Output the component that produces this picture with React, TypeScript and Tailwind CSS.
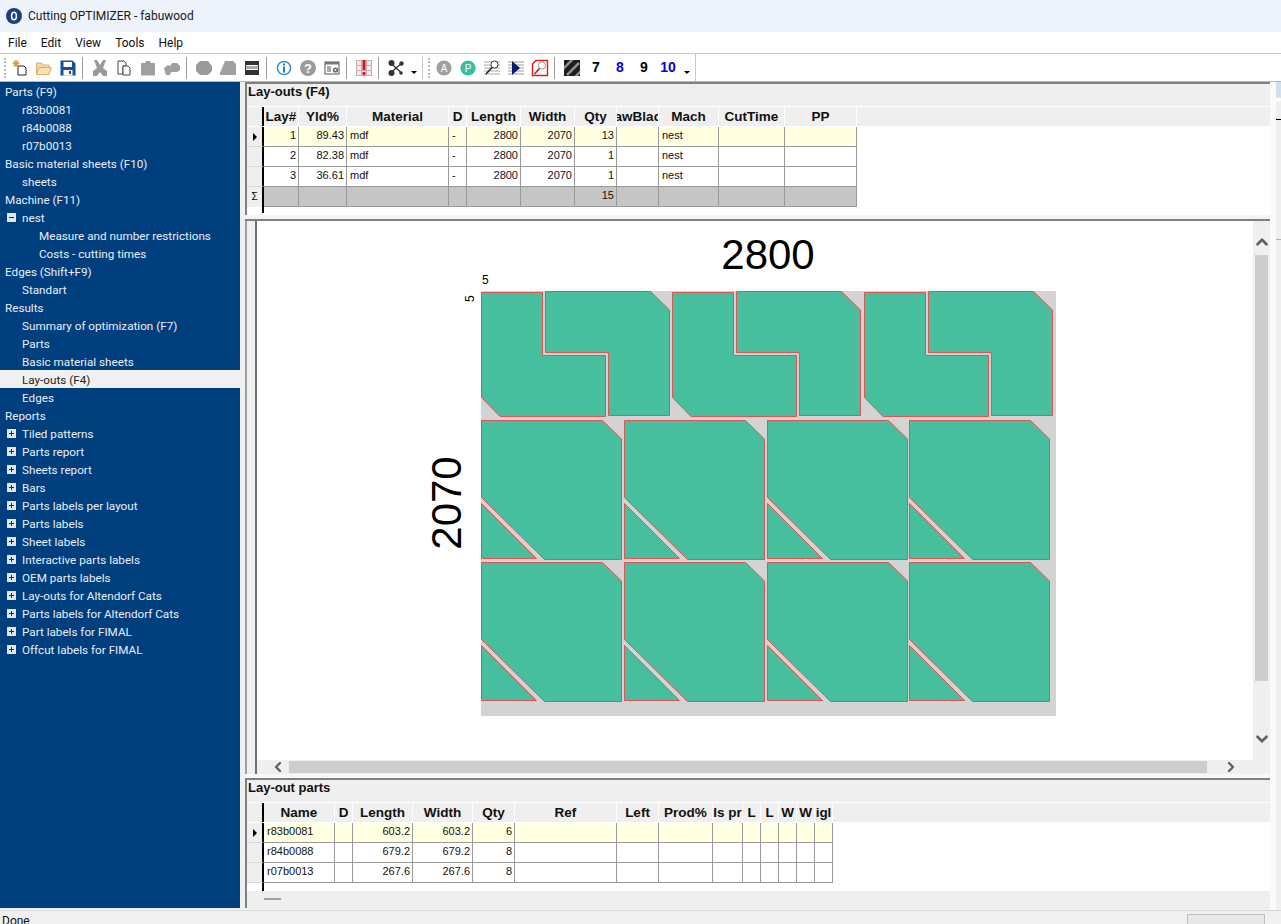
import { ChevronUp, ChevronDown, ChevronLeft, ChevronRight } from "lucide-react";

type TreeRow = { label: string; level: number; box?: "plus" | "minus"; active?: boolean };

const tree: TreeRow[] = [
  { label: "Parts (F9)", level: 0 },
  { label: "r83b0081", level: 1 },
  { label: "r84b0088", level: 1 },
  { label: "r07b0013", level: 1 },
  { label: "Basic material sheets (F10)", level: 0 },
  { label: "sheets", level: 1 },
  { label: "Machine (F11)", level: 0 },
  { label: "nest", level: 1, box: "minus" },
  { label: "Measure and number restrictions", level: 2 },
  { label: "Costs - cutting times", level: 2 },
  { label: "Edges (Shift+F9)", level: 0 },
  { label: "Standart", level: 1 },
  { label: "Results", level: 0 },
  { label: "Summary of optimization (F7)", level: 1 },
  { label: "Parts", level: 1 },
  { label: "Basic material sheets", level: 1 },
  { label: "Lay-outs (F4)", level: 1, active: true },
  { label: "Edges", level: 1 },
  { label: "Reports", level: 0 },
  { label: "Tiled patterns", level: 1, box: "plus" },
  { label: "Parts report", level: 1, box: "plus" },
  { label: "Sheets report", level: 1, box: "plus" },
  { label: "Bars", level: 1, box: "plus" },
  { label: "Parts labels per layout", level: 1, box: "plus" },
  { label: "Parts labels", level: 1, box: "plus" },
  { label: "Sheet labels", level: 1, box: "plus" },
  { label: "Interactive parts labels", level: 1, box: "plus" },
  { label: "OEM parts labels", level: 1, box: "plus" },
  { label: "Lay-outs for Altendorf Cats", level: 1, box: "plus" },
  { label: "Parts labels for Altendorf Cats", level: 1, box: "plus" },
  { label: "Part labels for FIMAL", level: 1, box: "plus" },
  { label: "Offcut labels for FIMAL", level: 1, box: "plus" },
];

const uiFont = "font-['Roboto',sans-serif]";
const gridFont = "font-['Liberation_Sans',Arial,sans-serif]";

function Box({ kind }: { kind: "plus" | "minus" }) {
  return (
    <svg width="9" height="9" viewBox="0 0 9 9" className="absolute left-[7px] top-[5px]">
      <rect x="0" y="0" width="9" height="9" fill="#dfe6ee" />
      <rect x="2" y="4" width="5" height="1" fill="#1c2f4a" />
      {kind === "plus" && <rect x="4" y="2" width="1" height="5" fill="#1c2f4a" />}
    </svg>
  );
}

function Sidebar() {
  return (
    <div className={`w-[240px] h-[826px] bg-[#003f7d] shrink-0 text-[11.7px] ${uiFont}`}>
      {tree.map((r, i) => (
        <div
          key={i}
          className={`relative h-[18px] pt-px leading-[18px] whitespace-nowrap ${r.active ? "bg-[#f0f0f0] text-[#222]" : "text-[#e8eef6]"} ${
            r.level === 0 ? "pl-[5px]" : r.level === 1 ? "pl-[22px]" : "pl-[39px]"
          }`}
        >
          {r.box && <Box kind={r.box} />}
          {r.label}
        </div>
      ))}
    </div>
  );
}

function Sep() {
  return (
    <div className="w-2 h-full flex items-center">
      <div className="ml-[2px] w-px h-[22px] bg-[#a0a0a0]" />
    </div>
  );
}

function Btn({ children }: { children: React.ReactNode }) {
  return <div className="w-6 h-full flex items-center justify-center shrink-0">{children}</div>;
}

function Gripper() {
  return <div className="w-px h-[20px] border-l-2 border-dotted border-[#bbb]" />;
}

function Drop() {
  return <div className="w-0 h-0 border-x-[3px] border-x-transparent border-t-[3px] border-t-black mt-[9px]" />;
}

function Num({ n, blue }: { n: string; blue?: boolean }) {
  return (
    <Btn>
      <span className={`text-[14px] font-bold ${gridFont} ${blue ? "text-[#0000e0]" : "text-black"}`}>{n}</span>
    </Btn>
  );
}

const I = ({ children }: { children: React.ReactNode }) => (
  <svg width="18" height="18" viewBox="0 0 18 18">
    {children}
  </svg>
);

function Toolbar() {
  return (
    <div className="h-[27px] bg-white flex">
      <div className="w-[696px] h-full flex items-center pl-2 border-r border-[#c8c8c8] relative">
        <div className="absolute left-[4px] top-[4px]">
          <Gripper />
        </div>
        <Btn>
          <I>
            <path d="M7 7h6l2 2v7H7z" fill="#fff" stroke="#222" />
            <path d="M5 1v7M1.5 4.5h7M2.5 2l5 5M7.5 2l-5 5" stroke="#e8941c" strokeWidth="1.2" />
          </I>
        </Btn>
        <Btn>
          <I>
            <path d="M1.5 15.5V4h5l1.5 2h6v2.5" fill="#f4d8a0" stroke="#d8b070" />
            <path d="M1.5 15.5L4 8.5h12.5l-2.5 7z" fill="#f8e0b0" stroke="#d8b070" />
          </I>
        </Btn>
        <Btn>
          <I>
            <path d="M1.5 1.5h12l3 3v12h-15z" fill="#14509c" />
            <rect x="4.5" y="3" width="8.5" height="5" fill="#fff" />
            <rect x="4.5" y="11" width="9" height="5.5" fill="#fff" />
            <rect x="10" y="12" width="2" height="3" fill="#14509c" />
          </I>
        </Btn>
        <Sep />
        <Btn>
          <I>
            <path d="M3 1h3l3 5 3-5h3l-3 8 4 3v5h-4l-3-4-3 4H2v-5l4-3z" fill="#9a9a9a" />
          </I>
        </Btn>
        <Btn>
          <I>
            <path d="M3 2h6l2 2v3H8v8H3z" fill="#fff" stroke="#444" />
            <path d="M8 7h5l2 2v7H8z" fill="#fff" stroke="#444" />
          </I>
        </Btn>
        <Btn>
          <I>
            <path d="M2 4h4l1-2h4l1 2h4v12.5H2z" fill="#a0a0a0" />
          </I>
        </Btn>
        <Btn>
          <I>
            <path d="M1 9l4-3 2 1 2-3h5l3 3v4l-3 2H8l-1 3H3l-1-3z" fill="#a0a0a0" />
          </I>
        </Btn>
        <Sep />
        <Btn>
          <I>
            <path d="M5 2h8l4 5v5l-4 4H5l-4-4V6z" fill="#9a9a9a" />
          </I>
        </Btn>
        <Btn>
          <I>
            <path d="M6 2h8l3 3v11H1v-2z" fill="#a0a0a0" />
          </I>
        </Btn>
        <Btn>
          <I>
            <rect x="2" y="2" width="14" height="14" fill="#333" />
            <rect x="3" y="6" width="12" height="1" fill="#fff" />
            <rect x="3" y="7" width="12" height="3" fill="#aaa" />
            <rect x="3" y="10" width="12" height="1" fill="#fff" />
          </I>
        </Btn>
        <Sep />
        <Btn>
          <I>
            <circle cx="9" cy="9" r="6.6" fill="#fff" stroke="#2a90d8" strokeWidth="1.5" />
            <rect x="8" y="4.5" width="2" height="2" fill="#2a7ac0" />
            <rect x="8" y="7.5" width="2" height="6" fill="#2a7ac0" />
          </I>
        </Btn>
        <Btn>
          <I>
            <circle cx="9" cy="9" r="8" fill="#9c9c9c" />
            <text x="9" y="13.5" textAnchor="middle" fontSize="13" fontWeight="700" fill="#fff" fontFamily="Liberation Sans">
              ?
            </text>
          </I>
        </Btn>
        <Btn>
          <I>
            <rect x="2" y="3" width="14" height="12" fill="#fff" stroke="#555" />
            <rect x="2" y="3" width="14" height="2.5" fill="#777" />
            <path d="M4 8h4M4 10h4M4 12h4" stroke="#555" />
            <circle cx="12.5" cy="11" r="2.6" fill="#666" />
            <circle cx="12.5" cy="11" r="1" fill="#fff" />
          </I>
        </Btn>
        <Sep />
        <Btn>
          <I>
            <rect x="1.5" y="1.5" width="15" height="15" fill="#f4eaea" stroke="#c8b0b0" />
            <path d="M1.5 6.5h15M1.5 11.5h15M6.5 1.5v15M11.5 1.5v15" stroke="#c8b0b0" />
            <rect x="7.5" y="1" width="3" height="10" fill="#e01020" />
            <rect x="7.5" y="13" width="3" height="3" fill="#e01020" />
          </I>
        </Btn>
        <Sep />
        <Btn>
          <I>
            <path d="M4.5 4.5L9 9M4.5 13.5L9 9M9 9L14 5M9 9L14 13.5" stroke="#333" strokeWidth="1.3" />
            <circle cx="4.5" cy="4" r="3" fill="#333" />
            <circle cx="4.5" cy="14" r="3" fill="#333" />
            <circle cx="14.5" cy="4.5" r="2.2" fill="#333" />
            <circle cx="14" cy="14" r="1.8" fill="#333" />
          </I>
        </Btn>
        <div className="w-[8px] pl-[3px] h-full flex items-center">
          <Drop />
        </div>
        <div className="absolute left-[422px] top-[2px] w-px h-[23px] bg-[#c8c8c8]" />
        <div className="absolute left-[428px] top-[4px]">
          <Gripper />
        </div>
        <div className="w-4" />
        <Btn>
          <I>
            <circle cx="9" cy="9" r="7.6" fill="#a0a0a0" />
            <text x="9" y="12.5" textAnchor="middle" fontSize="10" fill="#fff" fontFamily="Liberation Sans">
              A
            </text>
          </I>
        </Btn>
        <Btn>
          <I>
            <circle cx="9" cy="9" r="7.6" fill="#37bfa4" />
            <text x="9" y="12.5" textAnchor="middle" fontSize="10" fill="#fff" fontFamily="Liberation Sans">
              P
            </text>
          </I>
        </Btn>
        <Btn>
          <I>
            <path d="M1 3h16M1 6h16M1 9h16M1 12h16M1 15h16" stroke="#aaa" />
            <circle cx="11.5" cy="5.5" r="3.6" fill="#fff" stroke="#333" />
            <path d="M9 8.5l-6 6.5" stroke="#222" strokeWidth="1.6" />
          </I>
        </Btn>
        <Btn>
          <I>
            <path d="M1 3h16M1 6h16M1 9h16M1 12h16M1 15h16" stroke="#999" />
            <path d="M5 2l8 7-8 7z" fill="#0c1a70" />
          </I>
        </Btn>
        <Btn>
          <I>
            <path d="M5 1.5h11.5v15H1.5V5z" fill="#fff" stroke="#e81818" strokeWidth="1.4" />
            <circle cx="11" cy="6.5" r="3.6" fill="#fff" stroke="#999" />
            <path d="M8.5 9.5l-5 5.5" stroke="#b02020" strokeWidth="1.6" />
          </I>
        </Btn>
        <Sep />
        <Btn>
          <svg width="16" height="16" viewBox="0 0 16 16">
            <rect width="16" height="16" fill="#1c1c1c" />
            <path d="M-1 9L9-1M3 15L15 3M9 19L19 9" stroke="#8c8c8c" strokeWidth="2.6" />
          </svg>
        </Btn>
        <Num n="7" />
        <Num n="8" blue />
        <Num n="9" />
        <Num n="10" blue />
        <div className="pl-[4px] h-full flex items-center">
          <Drop />
        </div>
      </div>
    </div>
  );
}

const top = {
  cols: "grid-cols-[17px_35px_48px_102px_18px_54px_54px_42px_42px_60px_66px_72px]",
  head: ["Lay#", "Yld%", "Material", "D", "Length", "Width", "Qty", "SawBlade", "Mach", "CutTime", "PP"],
  align: ["r", "r", "l", "l", "r", "r", "r", "l", "l", "l", "l"],
  rows: [
    ["1", "89.43", "mdf", "-", "2800", "2070", "13", "", "nest", "", ""],
    ["2", "82.38", "mdf", "-", "2800", "2070", "1", "", "nest", "", ""],
    ["3", "36.61", "mdf", "-", "2800", "2070", "1", "", "nest", "", ""],
  ],
};

const bottom = {
  cols: "grid-cols-[17px_71px_18px_60px_60px_42px_102px_42px_54px_30px_18px_18px_18px_18px_18px]",
  head: ["Name", "D", "Length", "Width", "Qty", "Ref", "Left", "Prod%", "Is pr", "L", "L", "W", "W", "igl"],
  align: ["l", "l", "r", "r", "r", "l", "r", "r", "l", "l", "l", "l", "l", "l"],
  rows: [
    ["r83b0081", "", "603.2", "603.2", "6", "", "", "", "", "", "", "", "", ""],
    ["r84b0088", "", "679.2", "679.2", "8", "", "", "", "", "", "", "", "", ""],
    ["r07b0013", "", "267.6", "267.6", "8", "", "", "", "", "", "", "", "", ""],
  ],
};

function DataGrid({ t, sum }: { t: typeof top; sum?: boolean }) {
  const cell = "h-5 border-r border-b border-[#9a9a9a] text-[11px] leading-[17px] pl-[3px] pr-[2px] whitespace-nowrap overflow-hidden text-[#111]";
  return (
    <div className={gridFont}>
      <div className="bg-[#efefef] border-t border-white border-b-2 border-black -mb-px">
        <div className={`grid ${t.cols} h-[19px]`}>
          <div className="border-r-2 border-black" />
          {t.head.map((h, i) => (
            <div
              key={i}
              className="flex justify-center overflow-hidden border-r border-white text-[13.5px] font-bold leading-[19px] text-[#111] whitespace-nowrap"
            >
              {h}
            </div>
          ))}
        </div>
      </div>
      {t.rows.map((r, ri) => (
        <div key={ri} className={`grid ${t.cols} w-fit ${ri === 0 ? "bg-[#ffffe1]" : "bg-white"}`}>
          <div className="h-5 bg-[#efefef] border-b border-[#d8d8d8] border-r-2 border-r-black flex items-center justify-center">
            {ri === 0 && <div className="w-0 h-0 border-y-[4px] border-y-transparent border-l-[4px] border-l-black" />}
          </div>
          {r.map((c, i) => (
            <div key={i} className={`${cell} ${t.align[i] === "r" ? "text-right" : "text-left"}`}>
              {c}
            </div>
          ))}
        </div>
      ))}
      {sum && (
        <div className={`grid ${t.cols} w-fit bg-[#c6c6c6]`}>
          <div className="h-5 bg-[#efefef] border-r-2 border-black text-[10px] leading-[20px] text-center">Σ</div>
          {t.head.map((_, i) => (
            <div key={i} className={`${cell} ${i === 6 ? "text-right" : ""}`}>
              {i === 6 ? "15" : ""}
            </div>
          ))}
        </div>
      )}
      <div className={`w-[17px] border-r-2 border-black ${sum ? "h-[6px]" : "h-[8px]"}`} />
    </div>
  );
}

const sx = [0, 191, 383];
const bx = [0, 143, 286, 428];

function Layout() {
  const stroke = { fill: "#47bf9f", stroke: "#e05454", strokeWidth: 1 };
  return (
    <svg width="996" height="539" viewBox="257 221 996 539" className="absolute left-0 top-0">
      <text x="768" y="269" textAnchor="middle" fontSize="42" fontFamily="Liberation Sans" fill="#000">
        2800
      </text>
      <text
        x="0"
        y="0"
        transform="translate(461 503) rotate(-90)"
        textAnchor="middle"
        fontSize="42"
        fontFamily="Liberation Sans"
        fill="#000"
      >
        2070
      </text>
      <text x="482" y="284" fontSize="12" fontFamily="Liberation Sans" fill="#000">
        5
      </text>
      <text x="0" y="0" transform="translate(474 302) rotate(-90)" fontSize="12" fontFamily="Liberation Sans" fill="#000">
        5
      </text>
      <rect x="481" y="291" width="575" height="425" fill="#d3d3d3" />
      {sx.map((dx) => (
        <g key={dx} transform={`translate(${dx} 0)`}>
          <polygon {...stroke} points="481.5,292.5 542.5,292.5 542.5,355.5 605.5,355.5 605.5,416.5 500,416.5 481.5,397.5" />
          <polygon {...stroke} points="545.5,291.5 650.5,291.5 669.5,310 669.5,415.5 608.5,415.5 608.5,352.5 545.5,352.5" />
        </g>
      ))}
      {[0, 142].map((dy) =>
        bx.map((dx) => (
          <g key={`${dx}-${dy}`} transform={`translate(${dx} ${dy})`}>
            <polygon {...stroke} points="481.5,420.5 602.5,420.5 621.5,439 621.5,559.5 544.5,559.5 481.5,497.5" />
            <polygon {...stroke} points="481.5,503.5 536.5,558.5 481.5,558.5" />
          </g>
        ))
      )}
    </svg>
  );
}

function Right() {
  return (
    <div className="w-[1025px] flex flex-col shrink-0">
      {/* upper grid */}
      <div className="h-[133px] border-t-2 border-l-2 border-[#808080] bg-[#efefef] shrink-0 flex flex-col">
        <div className={`h-[22px] pl-px text-[13px] font-bold leading-[15px] text-[#111] ${gridFont}`}>Lay-outs (F4)</div>
        <div className="h-[109px] bg-white">
          <DataGrid t={top} sum />
        </div>
      </div>
      <div className="h-[4px] bg-[#f4f4f4] shrink-0" />
      {/* drawing */}
      <div className="h-[555px] flex shrink-0 bg-[#efefef] border-t-2 border-[#808080]">
        <div className="w-3 border-l-2 border-[#a0a0a0] border-r-2 border-r-[#707070] shrink-0" />
        <div className="flex-1 flex flex-col">
          <div className="flex h-[539px]">
            <div className="relative w-[996px] bg-white overflow-hidden shrink-0">
              <Layout />
            </div>
            <div className="flex-1 flex flex-col items-center justify-between py-[12px] relative">
              <ChevronUp size={18} strokeWidth={3.5} className="text-[#606060]" />
              <div className="absolute top-[34px] left-[2px] w-[13px] h-[426px] bg-[#cdcdcd]" />
              <ChevronDown size={18} strokeWidth={3.5} className="text-[#606060]" />
            </div>
          </div>
          <div className="h-[14px] flex items-center relative">
            <ChevronLeft size={16} strokeWidth={3.5} className="text-[#606060] ml-[13px]" />
            <div className="absolute left-[32px] top-px w-[918px] h-[12px] bg-[#cdcdcd]" />
            <ChevronRight size={16} strokeWidth={3.5} className="text-[#606060] ml-[937px]" />
          </div>
        </div>
      </div>
      <div className="h-[4px] bg-[#f8f8f8] shrink-0" />
      {/* lower grid */}
      <div className="h-[130px] border-t-2 border-l-2 border-[#808080] bg-[#efefef] shrink-0 flex flex-col">
        <div className={`h-[22px] pl-px text-[13px] font-bold leading-[15px] text-[#111] ${gridFont}`}>Lay-out parts</div>
        <div className="h-[89px] bg-white">
          <DataGrid t={bottom} />
        </div>
        <div className="pl-[17px] pt-[7px]">
          <div className="w-[17px] h-[2px] bg-[#a0a0a0]" />
        </div>
      </div>
    </div>
  );
}

export default function App() {
  return (
    <div className={`w-[1281px] h-[924px] overflow-hidden bg-[#f0f0f0] flex flex-col ${uiFont}`}>
      {/* title */}
      <div className="h-8 bg-[#eef2fb] flex items-center pl-[6px] shrink-0">
        <svg width="16" height="16" viewBox="0 0 16 16">
          <circle cx="8" cy="8" r="8" fill="#1c3f80" />
          <ellipse cx="8" cy="8" rx="2.4" ry="3.8" fill="none" stroke="#fff" strokeWidth="1.6" />
        </svg>
        <span className="ml-[6px] text-[12px] text-[#1a1a1a]">Cutting OPTIMIZER - fabuwood</span>
      </div>
      {/* menu */}
      <div className="h-[22px] bg-white border-b border-[#c8c8c8] flex items-center pl-2 gap-[14px] text-[12px] text-[#111] shrink-0">
        <span>File</span>
        <span>Edit</span>
        <span>View</span>
        <span>Tools</span>
        <span>Help</span>
      </div>
      <Toolbar />
      <div className="flex-1 flex min-h-0 border-t border-[#b8b8b8]">
        <Sidebar />
        <div className="w-[5px] shrink-0" />
        <Right />
        <div className="flex-1 flex">
          <div className="w-[6px] bg-[#fafafa]" />
          <div className="flex-1 bg-[#efefef]">
            <div className="h-4 bg-[#cfe0ee]" />
            <div className="h-[3px] bg-white" />
            <div className="h-[19px] border-b border-black" />
            <div className="h-[120px] border-b border-[#b0b0b0]" />
          </div>
        </div>
      </div>
      {/* status */}
      <div className="h-[14px] shrink-0 border-t border-[#d8d8d8] bg-[#f0f0f0] relative text-[12px] text-[#111] pl-[2px] leading-[20px]">
        Done
        <div className="absolute left-[1187px] top-[3px] w-[78px] h-[12px] border border-[#c0c0c0] bg-[#e8e8e8]" />
      </div>
    </div>
  );
}
